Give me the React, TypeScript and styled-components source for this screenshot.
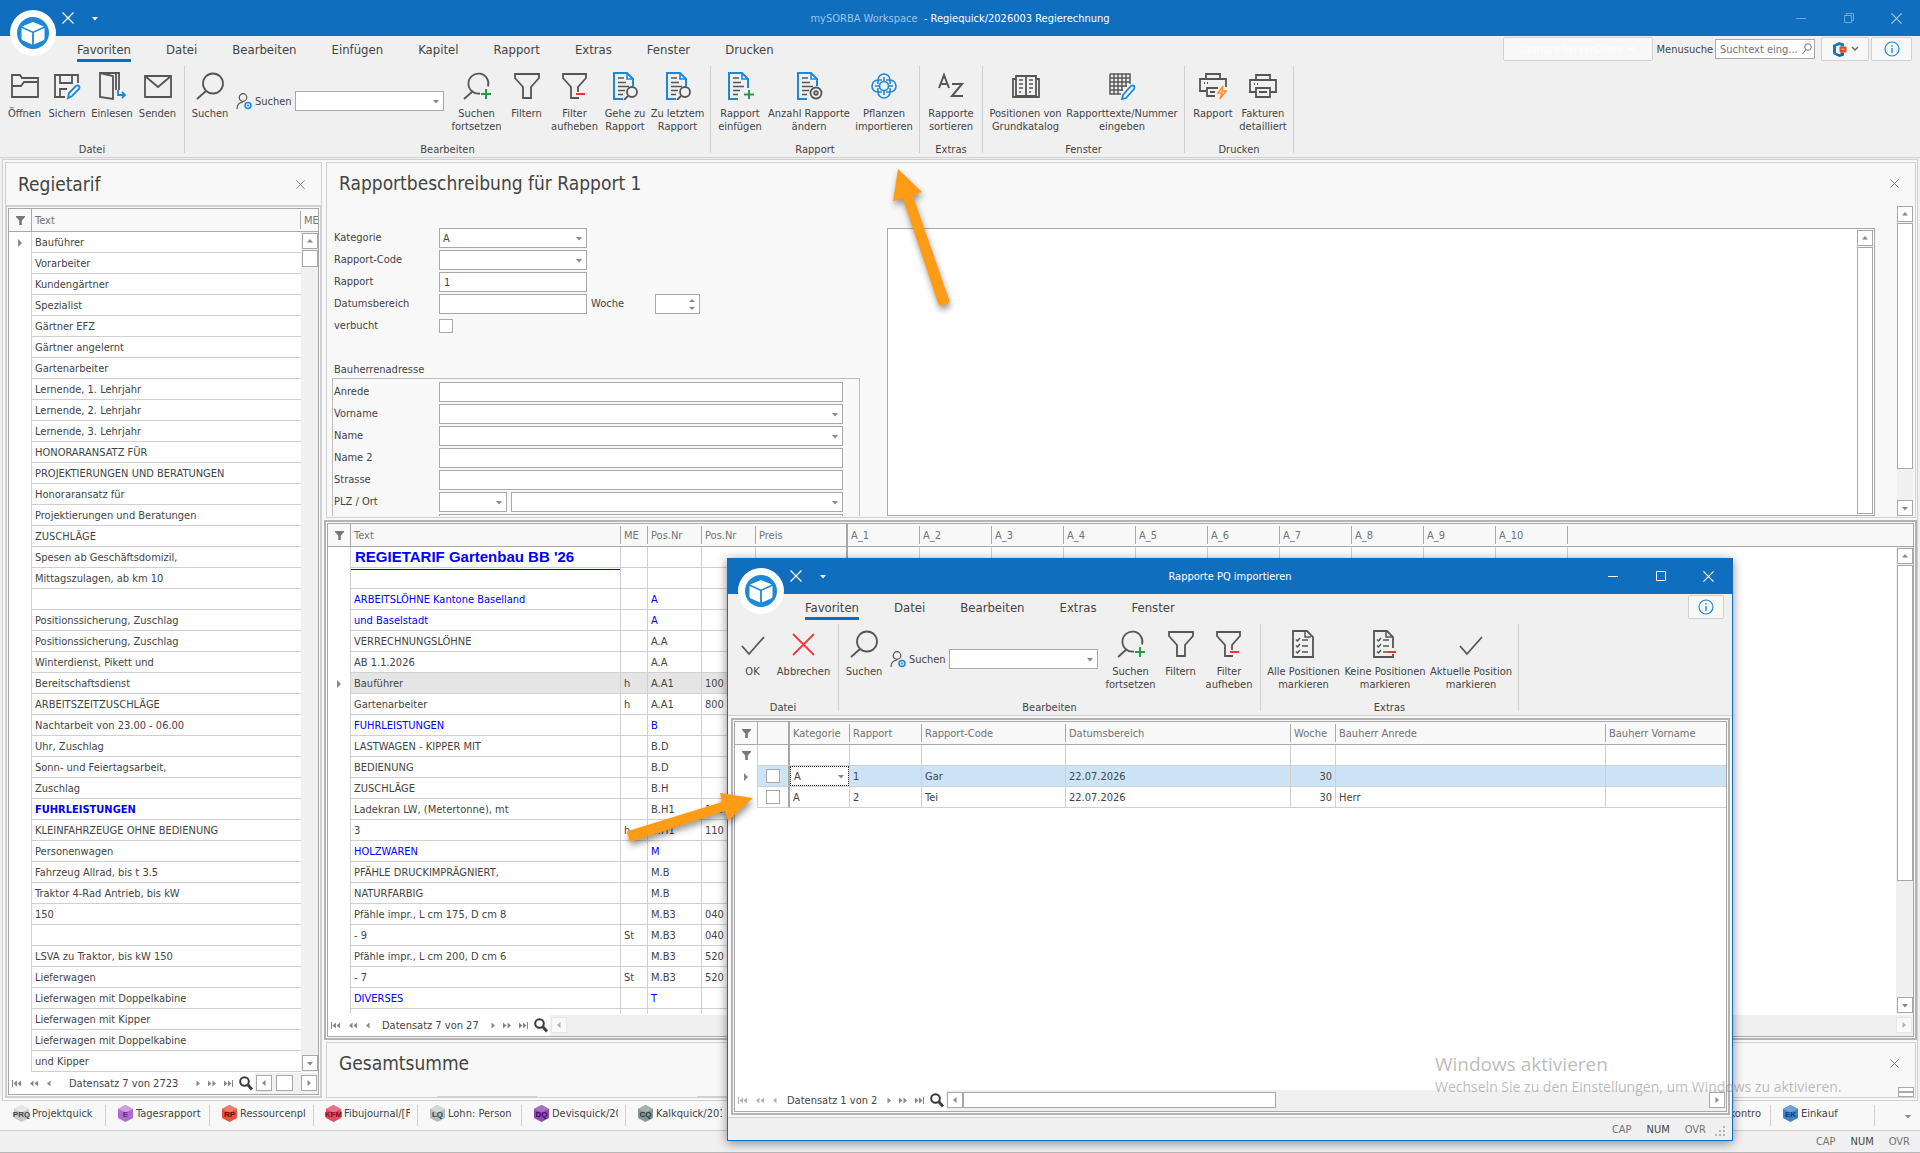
import React from 'react';
import styled, { createGlobalStyle, css } from 'styled-components';

const UI_FONT = '"DejaVu Sans Condensed", Tahoma, Roboto, sans-serif';
const INK = '#444444';
const MUTED = '#737373';
const BLUE = '#106ebe';
const SKY = '#1e88d8';
const LINE = '#d0d0d0';
const EDGE = '#a8a8a8';
const CHROME = '#f0f0f0';
const SURFACE = '#f8f8f8';

const GlobalStyle = createGlobalStyle`
  *, *::before, *::after { box-sizing: border-box; }
  body { margin: 0; font: 11px/13px ${UI_FONT}; color: ${INK}; background: ${CHROME}; overflow: hidden; }
  button, input, select, textarea { font: inherit; color: inherit; margin: 0; padding: 0; border: 0; background: none; outline: 0; border-radius: 0; }
  button { cursor: default; }
  svg { display: block; flex: none; }
`;

/* ---------- shell ---------- */

const Shell = styled.div`
  position: relative;
  display: flex;
  flex-direction: column;
  height: 100vh;
  overflow: hidden;
`;

const TitleBar = styled.header`
  display: flex;
  flex: none;
  align-items: center;
  height: 36px;
  background: ${BLUE};
  color: #fff;
`;

const TitleSide = styled.div<{ $end?: boolean }>`
  display: flex;
  flex: 1;
  align-items: center;
  justify-content: ${p => (p.$end ? 'flex-end' : 'flex-start')};
`;

const LogoSlot = styled.div`
  position: relative;
  width: 56px;
  height: 36px;
`;

const LogoMark = styled.svg`
  position: absolute;
  left: 10px;
  top: 10px;
  z-index: 2;
`;

const TitleTool = styled.button<{ $w: number; $dim?: boolean }>`
  display: flex;
  align-items: center;
  justify-content: center;
  width: ${p => p.$w}px;
  height: 36px;
  opacity: ${p => (p.$dim ? 0.4 : 1)};
`;

const TitleText = styled.h1`
  margin: 0;
  font: inherit;
  white-space: pre;
`;

const Faded = styled.span`
  color: #9cc6ea;
`;

/* ---------- ribbon ---------- */

const Ribbon = styled.div`
  flex: none;
  background: ${CHROME};
  border-bottom: 1px solid ${LINE};
`;

const TabRow = styled.div`
  display: flex;
  align-items: flex-start;
  height: 30px;
  padding-left: 77px;
`;

const Tabs = styled.nav`
  display: flex;
  flex: 1;
  gap: 35px;
`;

const Tab = styled.button<{ $on?: boolean }>`
  height: 26px;
  font-size: 13px;
  line-height: 18px;
  border-top: 4px solid transparent;
  border-bottom: 3px solid ${p => (p.$on ? BLUE : 'transparent')};
`;

const Tools = styled.div`
  display: flex;
  align-items: center;
  gap: 2px;
  padding: 1px 8px 0 0;
`;

const ToolBox = styled.button<{ $w: number }>`
  display: flex;
  align-items: center;
  justify-content: center;
  gap: 4px;
  width: ${p => p.$w}px;
  height: 24px;
  border: 1px solid ${LINE};
  border-radius: 2px;
  background: ${SURFACE};
  color: #fff;
`;

const MenuSearch = styled.label`
  display: flex;
  align-items: center;
  gap: 2px;
  padding: 0 4px 0 2px;
`;

const MenuField = styled.span`
  display: flex;
  align-items: center;
  width: 100px;
  height: 20px;
  padding: 0 2px 0 4px;
  border: 1px solid ${EDGE};
  background: #fff;
`;

const BareInput = styled.input`
  flex: 1;
  width: 100%;
  min-width: 0;
  text-overflow: ellipsis;
  &::placeholder { color: ${MUTED}; opacity: 1; }
`;

const GroupRow = styled.div`
  display: flex;
`;

const Group = styled.section`
  display: flex;
  flex-direction: column;
  height: 91px;
  padding: 0 4px;
`;

const Divider = styled.span<{ $h?: number }>`
  flex: none;
  width: 1px;
  height: ${p => p.$h ?? 87}px;
  background: ${LINE};
`;

const GroupItems = styled.div`
  display: flex;
  flex: 1;
`;

const GroupName = styled.div`
  text-align: center;
  height: 14px;
`;

const RibbonButton = styled.button<{ $w: number }>`
  display: flex;
  flex-direction: column;
  align-items: center;
  gap: 7px;
  width: ${p => p.$w}px;
  padding-top: 6px;
  line-height: 13px;
  white-space: pre;
  text-align: center;
`;

const Finder = styled.label`
  display: flex;
  align-items: center;
  gap: 3px;
  width: 217px;
  height: 20px;
  margin-top: 25px;
  padding: 0 5px;
`;

/* ---------- fields ---------- */

const fieldBox = css`
  height: 20px;
  border: 1px solid ${EDGE};
  background: #fff;
`;

const ComboBox = styled.span<{ $w?: number; $focus?: boolean }>`
  ${fieldBox}
  display: flex;
  align-items: center;
  flex: ${p => (p.$w ? 'none' : '1')};
  width: ${p => (p.$w ? p.$w + 'px' : 'auto')};
  padding-right: 4px;
  ${p => p.$focus && 'border: 1px dotted #333;'}
`;

const Select = styled.select`
  flex: 1;
  min-width: 0;
  height: 100%;
  padding-left: 3px;
  appearance: none;
`;

const TextField = styled.input<{ $w?: number }>`
  ${fieldBox}
  border: 1px solid ${EDGE} !important;
  background: #fff !important;
  flex: ${p => (p.$w ? 'none' : '1')};
  width: ${p => (p.$w ? p.$w + 'px' : 'auto')};
  padding-left: 4px !important;
`;

const Tick = styled.input.attrs({ type: 'checkbox' })`
  appearance: none;
  display: block;
  width: 14px;
  height: 14px;
  border: 1px solid ${EDGE} !important;
  background: #fff !important;
`;

const Spin = styled.span`
  ${fieldBox}
  display: flex;
  align-items: center;
  width: 45px;
  padding-right: 4px;
`;

const Arrows = styled.span`
  display: flex;
  flex-direction: column;
  gap: 5px;
`;

/* ---------- dock ---------- */

const Dock = styled.main`
  display: flex;
  flex: 1;
  gap: 2px;
  min-height: 0;
  margin: 1px 2px 0;
  padding: 2px 0 2px 2px;
  border: 1px solid ${LINE};
  background: ${SURFACE};
`;

const LeftDock = styled.aside`
  display: flex;
  flex: none;
  flex-direction: column;
  width: 317px;
`;

const Workspace = styled.div`
  display: flex;
  flex: 1;
  flex-direction: column;
  gap: 2px;
  min-width: 0;
`;

const PanelHead = styled.div<{ $boxed?: boolean }>`
  display: flex;
  flex: none;
  align-items: center;
  justify-content: space-between;
  height: ${p => (p.$boxed ? 43 : 41)}px;
  padding: 0 16px 0 12px;
  ${p => p.$boxed && `border: 1px solid ${LINE}; border-bottom: 0;`}
`;

const PanelTitle = styled.h2`
  margin: 0;
  padding-bottom: 1px;
  font-size: 19px;
  line-height: 22px;
  font-weight: 400;
`;

const Panel = styled.section<{ $h: number }>`
  flex: none;
  display: flex;
  flex-direction: column;
  height: ${p => p.$h}px;
  margin: 0 1px 0 2px;
  border: 1px solid ${LINE};
  overflow: hidden;
`;

const FormArea = styled.div`
  display: flex;
  flex: 1;
  min-height: 0;
  padding: 2px 2px 1px 5px;
`;

const FormColumn = styled.form`
  display: flex;
  flex: none;
  flex-direction: column;
  width: 528px;
  margin-right: 27px;
  padding-top: 21px;
  overflow: hidden;
`;

const FormRow = styled.div`
  display: flex;
  flex: none;
  align-items: center;
  height: 22px;
  padding-left: 2px;
`;

const FormLabel = styled.label<{ $w?: number }>`
  flex: none;
  width: ${p => p.$w ?? 105}px;
  padding-bottom: 1px;
`;

const FormGap = styled.div`
  flex: none;
  height: 22px;
`;

const FormGapInline = styled.span`
  flex: none;
  width: 4px;
`;

const Legend = styled.div`
  flex: none;
  height: 19px;
  padding: 4px 0 0 2px;
`;

const AddressBox = styled.fieldset`
  min-width: 0;
  margin: 0;
  padding: 2px 16px 0 0;
  border: 1px solid #bdbdbd;
  border-bottom: 0;
  ${FormRow} { padding-left: 1px; }
`;

const NotesBox = styled.div`
  display: flex;
  flex: 1;
  margin: 22px 22px 0 0;
  padding: 1px;
  border: 1px solid ${EDGE};
  background: #fff;
`;

const Notes = styled.textarea`
  flex: 1;
  resize: none;
`;

/* ---------- scroll bars ---------- */

const Track = styled.div<{ $row?: boolean }>`
  display: flex;
  flex-direction: ${p => (p.$row ? 'row' : 'column')};
  flex: ${p => (p.$row ? '1' : 'none')};
  align-self: stretch;
  width: ${p => (p.$row ? 'auto' : '16px')};
  gap: ${p => (p.$row ? 0 : 1)}px;
  background: ${CHROME};
`;

const ScrollButton = styled.button<{ $off?: boolean }>`
  display: flex;
  flex: none;
  align-items: center;
  justify-content: center;
  width: 16px;
  height: 16px;
  border: 1px solid ${p => (p.$off ? '#e0e0e0' : EDGE)};
  background: #fff;
  opacity: ${p => (p.$off ? 0.6 : 1)};
`;

const Thumb = styled.span<{ $size?: number; $row?: boolean }>`
  flex: ${p => (p.$size ? 'none' : '1')};
  ${p => p.$size && (p.$row ? `width: ${p.$size}px; height: 16px;` : `height: ${p.$size}px;`)}
  border: 1px solid ${EDGE};
  background: #fff;
`;

const Fill = styled.span<{ $size?: number }>`
  flex: ${p => (p.$size ? 'none' : '1')};
  width: ${p => (p.$size ? p.$size + 'px' : 'auto')};
`;

/* ---------- grids ---------- */

const Frame = styled.div<{ $tone: string }>`
  display: flex;
  flex: 1;
  min-height: 0;
  padding: 1px;
  border: 2px solid ${p => p.$tone};
  background: ${SURFACE};
`;

const FrameInner = styled.div`
  display: flex;
  flex: 1;
  flex-direction: column;
  min-width: 0;
  border: 1px solid ${EDGE};
  background: #fff;
`;

const GridArea = styled.div`
  display: flex;
  flex: 1;
  min-height: 0;
  overflow: hidden;
`;

const GridClip = styled.div`
  flex: 1;
  min-width: 0;
  overflow: hidden;
  background: linear-gradient(${SURFACE} 22px, ${EDGE} 22px, ${EDGE} 23px, #fff 23px);
`;

const GridSide = styled.div<{ $w: number }>`
  display: flex;
  flex: none;
  flex-direction: column;
  width: ${p => p.$w}px;
`;

const SideHead = styled.div`
  flex: none;
  height: 23px;
  padding: 5px 0 0 3px;
  border-bottom: 1px solid ${EDGE};
  background: ${SURFACE};
  color: ${MUTED};
  overflow: hidden;
`;

const SideTrack = styled.div`
  display: flex;
  flex: 1;
  justify-content: center;
  min-height: 0;
  padding: 1px 0;
  background: ${CHROME};
`;

const Table = styled.table<{ $w?: number }>`
  width: ${p => (p.$w ? p.$w + 'px' : '100%')};
  table-layout: fixed;
  border-collapse: separate;
  border-spacing: 0;
`;

const HeadCell = styled.th<{ $mark?: boolean; $frozen?: boolean }>`
  height: 23px;
  padding: 0;
  border-bottom: 1px solid ${EDGE};
  border-right: ${p => (p.$frozen ? `2px solid ${EDGE}` : p.$mark ? `1px solid ${EDGE}` : '0')};
  background: ${SURFACE};
  color: ${MUTED};
  font-weight: 400;
  text-align: left;
  > svg { margin: 0 auto; }
`;

const HeadText = styled.span<{ $bare?: boolean }>`
  display: block;
  height: 18px;
  padding: 3px 0 0 3px;
  border-right: ${p => (p.$bare ? '0' : `1px solid ${EDGE}`)};
  white-space: nowrap;
  overflow: hidden;
`;

const MarkCell = styled.td`
  height: 21px;
  padding: 0;
  border-right: 1px solid ${LINE};
  background: #fff;
  svg { margin: 0 auto; }
`;

type Tone = 'plain' | 'blue' | 'bold' | 'heading';

const Cell = styled.td<{ $tone?: Tone; $end?: boolean; $frozen?: boolean; $open?: boolean; $under?: boolean; $flush?: boolean }>`
  height: 21px;
  padding: ${p => (p.$flush ? '0' : '0 3px')};
  border-bottom: 1px solid ${LINE};
  border-right: ${p => (p.$open ? '0' : p.$frozen ? `2px solid ${EDGE}` : `1px solid ${LINE}`)};
  ${p => p.$tone && p.$tone !== 'plain' && 'color: #0000ff;'}
  ${p => p.$tone === 'bold' && 'font-weight: 700;'}
  ${p => p.$tone === 'heading' && 'padding-left: 4px; font: 700 15px/18px "Liberation Sans", Arial, sans-serif;'}
  ${p => p.$under && 'box-shadow: inset 0 2px 0 -1px #fff, inset 0 3px 0 -1px #0000c8;'}
  text-align: ${p => (p.$end ? 'right' : 'left')};
  white-space: nowrap;
  overflow: hidden;
  > ${Tick} { margin: 0 auto; }
`;

const Row = styled.tr<{ $bg?: string }>`
  background: ${p => p.$bg ?? '#fff'};
`;

const NavBar = styled.div`
  display: flex;
  flex: none;
  align-items: center;
  height: 22px;
  padding-left: 3px;
  background: #fff;
`;

const NavIcons = styled.div<{ $gap: string }>`
  display: flex;
  align-items: center;
  gap: ${p => p.$gap};
`;

const NavText = styled.span<{ $pad: number }>`
  padding: 0 ${p => p.$pad}px;
  white-space: nowrap;
`;

const NavScroll = styled.div`
  display: flex;
  flex: 1;
  margin-left: 2px;
  padding: 2px 1px 3px;
  background: ${CHROME};
`;

/* ---------- footer ---------- */

const TaskStrip = styled.nav`
  display: flex;
  flex: none;
  height: 30px;
  padding-left: 2px;
  border-bottom: 1px solid ${LINE};
  background: ${SURFACE};
`;

const Task = styled.button`
  display: flex;
  flex: none;
  align-items: flex-start;
  width: 104px;
  padding: 4px 0 0 11px;
  gap: 2px;
`;

const TaskName = styled.span`
  width: 66px;
  padding-top: 2px;
  text-align: left;
  white-space: nowrap;
  overflow: hidden;
`;

const TaskEdge = styled.span`
  flex: 1;
  align-self: flex-start;
  height: 21px;
  border-right: 1px solid ${LINE};
`;

const TaskMore = styled.button`
  display: flex;
  align-items: center;
  justify-content: flex-end;
  width: 45px;
  padding-right: 9px;
`;

const StatusBar = styled.footer<{ $grip?: boolean }>`
  display: flex;
  flex: none;
  align-items: center;
  justify-content: flex-end;
  gap: 15px;
  height: ${p => (p.$grip ? 23 : 22)}px;
  padding-right: ${p => (p.$grip ? 6 : 10)}px;
  border-top: ${p => (p.$grip ? `1px solid ${LINE}` : '0')};
  border-bottom: ${p => (p.$grip ? '0' : '1px solid #b8b8b8')};
  background: ${CHROME};
  color: ${MUTED};
  svg { margin: 4px 0 0 -6px; }
`;

const Active = styled.span`
  color: ${INK};
`;

/* ---------- overlays ---------- */

const Dialog = styled.section`
  position: absolute;
  left: 727px;
  top: 558px;
  z-index: 5;
  display: flex;
  flex-direction: column;
  width: 1006px;
  height: 583px;
  border: 1px solid ${BLUE};
  border-top: 0;
  background: ${SURFACE};
  box-shadow: 0 2px 10px rgba(0, 0, 0, 0.45);
`;

const DialogBody = styled.div`
  display: flex;
  flex: 1;
  min-height: 0;
  padding: 2px 2px 2px 3px;
`;

const Pointers = styled.svg`
  position: absolute;
  left: 600px;
  top: 150px;
  z-index: 8;
  pointer-events: none;
  filter: drop-shadow(1px 4px 3px rgba(0, 0, 0, 0.4));
`;

const Watermark = styled.div`
  position: absolute;
  left: 1435px;
  top: 1051px;
  z-index: 9;
  color: rgba(120, 120, 120, 0.5);
  font: 14px/20px "Open Sans", "Segoe UI", sans-serif;
  white-space: nowrap;
  pointer-events: none;
`;

const WatermarkHead = styled.div`
  font-size: 19px;
  line-height: 26px;
`;

/* ---------- drawings ---------- */

const G = '#555555';

const Logo = () => (
  <LogoMark width="46" height="46" viewBox="0 0 46 46">
    <circle cx="23" cy="23" r="23" fill="#fff" />
    <circle cx="23" cy="23" r="16" fill={SKY} />
    <path d="M23 12l11 4.5-11 5-11-5zM11.5 18l10.600 4.800V34.500L13 30.500Q11.500 29.800 11.500 28.500zM34.500 18l-10.600 4.800V34.500L33 30.500Q34.500 29.800 34.500 28.500z" fill="#fff" />
  </LogoMark>
);

const Cross = ({ size = 9, color = MUTED }: { size?: number; color?: string }) => (
  <svg width={size} height={size} viewBox="0 0 12 12" stroke={color} strokeWidth="1.2" fill="none">
    <path d="M.5 .5l11 11M11.500 .5l-11 11" />
  </svg>
);

const Caret = ({ color = '#888', dir = 'down' }: { color?: string; dir?: 'down' | 'up' | 'left' | 'right' }) => {
  const d = { down: 'M0 2h6L3 5.500z', up: 'M0 4.500h6L3 1z', left: 'M4.500 0v6L1 3z', right: 'M1.500 0v6L5 3z' }[dir];
  return (
    <svg width="6" height="6" viewBox="0 0 6 6" fill={color}>
      <path d={d} />
    </svg>
  );
};

const SpinCaret = ({ up }: { up?: boolean }) => (
  <svg width="6" height="3" viewBox="0 0 6 3" fill="#888">
    <path d={up ? 'M0 3h6L3 0z' : 'M0 0h6L3 3z'} />
  </svg>
);

const Funnel = () => (
  <svg width="9" height="9" viewBox="0 0 9 9" fill="#777">
    <path d="M0 0h9v1L5.800 4.500V9H3.200V4.500L0 1z" />
  </svg>
);

const RowMark = () => (
  <svg width="4" height="8" viewBox="0 0 4 8" fill="#888">
    <path d="M0 0l4 4-4 4z" />
  </svg>
);

const Lens = () => (
  <svg width="14" height="15" viewBox="0 0 14 15" fill="none" stroke="#3a3a3a">
    <circle cx="5.500" cy="5.500" r="4.300" strokeWidth="2" />
    <path d="M9 9l4 4.500" strokeWidth="2.800" />
  </svg>
);

const NAV_SHAPES: Record<string, [number, string]> = {
  first: [9, 'M0 0h1v7H0zM5 .5v6L1.500 3.500zM9 .5v6L5.500 3.500z'],
  pageBack: [8, 'M3.500 .5v6L0 3.500zM8 .5v6L4.500 3.500z'],
  back: [4, 'M3.500 .5v6L0 3.500z'],
  next: [4, 'M.5 .5v6L4 3.500z'],
  pageNext: [8, 'M0 .5v6l3.500-3zM4.500 .5v6L8 3.500z'],
  last: [9, 'M8 0h1v7H8zM0 .5v6l3.500-3zM4 .5v6l3.500-3z'],
};

const NavIcon = ({ kind, dim }: { kind: string; dim?: boolean }) => {
  const [w, d] = NAV_SHAPES[kind];
  return (
    <button aria-label={kind}>
      <svg width={w} height="7" viewBox={`0 0 ${w} 7`} fill={dim ? '#b4b4b4' : '#888'}>
        <path d={d} />
      </svg>
    </button>
  );
};

const InfoIcon = () => (
  <svg width="16" height="16" viewBox="0 0 16 16" fill="none" stroke={SKY} strokeWidth="1.200">
    <circle cx="8" cy="8" r="7" />
    <path d="M8 7v5M8 4v1.500" strokeWidth="1.400" />
  </svg>
);

const OfficeIcon = () => (
  <svg width="15" height="15" viewBox="0 0 15 15">
    <path d="M1 3L7 0l5 1.500v3H8.500V3L4 4.300v6.700l-3 1z" fill="#0a7ad0" />
    <path d="M4 11l4.500 1.500v-2H12v3L7.500 15 1 12z" fill="#0a64b4" />
    <rect x="7.500" y="4.500" width="7" height="6" rx="1" fill="#e8481c" />
    <path d="M9.500 6.500h3v1.500h-3z" fill="#ff9a70" />
  </svg>
);

const ChevronDown = ({ color }: { color: string }) => (
  <svg width="8" height="6" viewBox="0 0 8 6" fill="none" stroke={color} strokeWidth="1.500">
    <path d="M1 1l3 3 3-3" />
  </svg>
);

const PersonIcon = () => (
  <svg width="16" height="17" viewBox="0 0 16 17" fill="none" stroke={G} strokeWidth="1.200">
    <circle cx="7" cy="4.500" r="3.800" />
    <path d="M1 16c0-4 2-6.500 6-7" />
    <circle cx="12" cy="12.500" r="3" stroke={SKY} strokeWidth="1.500" fill="#d8ecfa" />
    <circle cx="12" cy="12.500" r="1" fill={SKY} stroke="none" />
  </svg>
);

const Sheet = ({ short }: { short?: boolean }) => (
  <>
    <path d={short ? 'M12 27H3V1h13l6 6v7' : 'M12 27H3V1h13l6 6v9'} stroke={SKY} strokeWidth="2" />
    <path d="M16 1v6h6" stroke={SKY} strokeWidth="1.600" />
    <path d="M7 6h6M7 10.500h8M7 14.500h11M7 18.500h7M7 22.500h5" strokeWidth="1.500" />
  </>
);

const Checklist = () => (
  <>
    <path d="M15 1v6h6" strokeWidth="1.500" />
    <path d="M6 9.500l1.500 1.500 2.500-3M6 15.500L7.500 17l2.500-3M6 21.500L7.500 23l2.500-3M12 10h6M12 16h6M12 22h6" strokeWidth="1.500" />
  </>
);

const DRAWINGS: Record<string, React.ReactNode> = {
  open: <path d="M1 25V3h8l2 3h16v19zM1 14h9l3-4h14" />,
  save: (
    <>
      <path d="M12 25H2V3h23v8" />
      <path d="M7 3v8h12V3M7 25v-8h7" />
      <path d="M15 26l1-5 7-7q2-1 3 0t0 3l-7 7z" stroke={SKY} />
    </>
  ),
  read: (
    <>
      <path d="M18 18V1H2v24l13 2V4L2 1" />
      <path d="M16 1h5v17" />
      <path d="M20 18v5h7M24 20l3 3-3 3" stroke={SKY} />
    </>
  ),
  send: <path d="M1 4h26v21H1zM1 4l13 11L27 4" />,
  find: (
    <>
      <circle cx="17" cy="11.500" r="10" />
      <path d="M10 19l-9 8" />
    </>
  ),
  findNext: (
    <>
      <path d="M17 21.500A10 10 0 1 1 25 14.500M10 19l-9 8" />
      <path d="M23 17v10M18 22h10" stroke="#2a9a48" strokeWidth="2" />
    </>
  ),
  filter: <path d="M2 2h24v4l-8 9v11h-8V15L2 6z" />,
  filterOff: (
    <>
      <path d="M17 20v-5l8-9V2H2v4l8 9v11h8" />
      <path d="M15 22h9" stroke="#ee3333" strokeWidth="2" />
    </>
  ),
  sheetFind: (
    <>
      <Sheet short />
      <circle cx="21" cy="20" r="5" />
      <path d="M17 24l-4 4" />
    </>
  ),
  sheetAdd: (
    <>
      <Sheet />
      <path d="M23 18v9M18 22.500h10" stroke="#2a9a48" strokeWidth="2" />
    </>
  ),
  sheetGear: (
    <>
      <Sheet short />
      <circle cx="21" cy="21" r="5.500" />
      <circle cx="21" cy="21" r="1.800" />
    </>
  ),
  plant: (
    <g stroke={SKY} strokeWidth="1.600">
      <circle cx="14" cy="14" r="4.500" />
      <path d="M8 12V8a6 6 0 0 1 12 0v4M8 16v4a6 6 0 0 0 12 0v-4M12 8H8a6 6 0 0 0 0 12h4M16 8h4a6 6 0 0 1 0 12h-4" />
      <path d="M14 5v4M14 19v4M5 14h4M19 14h4" />
    </g>
  ),
  sort: (
    <path d="M2 16L7 3l5 13M4 12h7M15 12h10L15 24h11" strokeWidth="2" />
  ),
  book: (
    <>
      <path d="M14 4v20M4 4h20v20H4z" />
      <path d="M4 7H1v18h26V7h-3" />
      <path d="M7 8h4M7 12h4M7 16h4M7 20h2M17 8h4M17 12h4M17 16h4M17 20h2" strokeWidth="1.500" />
    </>
  ),
  gridEdit: (
    <>
      <path d="M2 2h20v10M2 2v20h11M2 6h20M2 10h20M2 14h17M2 18h13M6 2v20M10 2v20M14 2v17M18 2v13" strokeWidth="1.500" />
      <path d="M14 27l1-4 8-9q2-1 3 0t0 3l-8 9z" stroke={SKY} />
    </>
  ),
  printFlash: (
    <>
      <path d="M7 7V2h14v5M7 19H1V7h26v8M16 24H8v-8h11M5 11h1M8 11h1M11 20h5" />
      <path d="M24 14l-5 7h4l-2 6 6-8h-4z" stroke="#ff9028" strokeWidth="1.500" />
    </>
  ),
  print: <path d="M7 8V3h14v5M7 20H1V8h26v12h-6M7 16h14v9H7zM5 12h1M8 12h1M10 20h8" />,
  ok: <path d="M3 16l7 8L25 7" />,
  cancel: <path d="M3 4l21 21M24 4L3 25" stroke="#ee3b3b" strokeWidth="1.800" />,
  checkAll: (
    <>
      <path d="M3 1h14l6 6v20H3z" />
      <Checklist />
    </>
  ),
  checkNone: (
    <>
      <path d="M22 18V7l-6-6H3v26h19v-3" />
      <Checklist />
      <path d="M17 22h8" stroke="#ee3333" strokeWidth="2" />
    </>
  ),
};

const Drawing = ({ name }: { name: string }) => (
  <svg width="28" height="28" viewBox="0 0 28 28" fill="none" stroke={G} strokeWidth="1.800">
    {DRAWINGS[name]}
  </svg>
);

const CubeBadge = ({ tag, top, side, ink }: { tag: string; top: string; side: string; ink: string }) => (
  <svg width="17" height="17" viewBox="0 0 17 17" overflow="visible">
    <path d="M8.500 0l7.500 4v9l-7.500 4L1 13V4z" fill={side} />
    <path d="M8.500 0l7.500 4-7.500 3.500L1 4z" fill={top} />
    <text x="8.500" y="12" textAnchor="middle" fontSize="8" fontWeight="700" fontFamily="Liberation Sans" fill={ink}>
      {tag}
    </text>
  </svg>
);

/* ---------- composed parts ---------- */

type Item = { icon: string; label: string; w: number };

const Buttons = ({ items }: { items: Item[] }) => (
  <>
    {items.map(b => (
      <RibbonButton key={b.label} $w={b.w}>
        <Drawing name={b.icon} />
        {b.label}
      </RibbonButton>
    ))}
  </>
);

const RibbonGroup = ({ name, children }: { name: string; children: React.ReactNode }) => (
  <>
    <Group aria-label={name}>
      <GroupItems>{children}</GroupItems>
      <GroupName>{name}</GroupName>
    </Group>
    <Divider />
  </>
);

const Combo = ({ id, w, value = '', focus }: { id?: string; w?: number; value?: string; focus?: boolean }) => (
  <ComboBox $w={w} $focus={focus}>
    <Select id={id} defaultValue={value} aria-label={id ? undefined : 'Auswahl'}>
      <option value={value}>{value}</option>
    </Select>
    <Caret />
  </ComboBox>
);

const SearchFinder = ({ id }: { id: string }) => (
  <Finder htmlFor={id}>
    <PersonIcon />
    Suchen
    <Combo id={id} w={149} />
  </Finder>
);

const VScroll = ({ thumb }: { thumb?: number }) => (
  <Track>
    <ScrollButton aria-label="Nach oben"><Caret dir="up" /></ScrollButton>
    <Thumb $size={thumb} />
    {thumb && <Fill />}
    {thumb && <ScrollButton aria-label="Nach unten"><Caret dir="down" /></ScrollButton>}
  </Track>
);

const HScroll = ({ thumb, lead, off }: { thumb?: number; lead?: number; off?: boolean }) => (
  <NavScroll>
    <Track $row>
      <ScrollButton $off={off} aria-label="Nach links"><Caret dir="left" /></ScrollButton>
      {lead && <Fill $size={lead} />}
      {thumb && <Thumb $row $size={thumb} />}
      <Fill />
      <ScrollButton $off={off} aria-label="Nach rechts"><Caret dir="right" /></ScrollButton>
    </Track>
  </NavScroll>
);

const Navigator = ({ text, pad, dim, children }: { text: string; pad: number; dim?: boolean; children: React.ReactNode }) => (
  <NavBar>
    <NavIcons $gap="9px">
      <NavIcon kind="first" dim={dim} />
      <NavIcon kind="pageBack" dim={dim} />
      <NavIcon kind="back" dim={dim} />
    </NavIcons>
    <NavText $pad={pad}>{text}</NavText>
    <NavIcons $gap="8px">
      <NavIcon kind="next" />
      <NavIcon kind="pageNext" />
      <NavIcon kind="last" />
    </NavIcons>
    <LensButton aria-label="Suchen"><Lens /></LensButton>
    {children}
  </NavBar>
);

const LensButton = styled.button`
  padding-left: 6px !important;
`;

const Chrome = ({ title, dim }: { title: React.ReactNode; dim?: boolean }) => (
  <TitleBar>
    <TitleSide>
      <LogoSlot><Logo /></LogoSlot>
      <TitleTool $w={24} aria-label="Schliessen"><Cross size={12} color="#fff" /></TitleTool>
      <TitleTool $w={30} aria-label="Anpassen"><Caret color="#fff" /></TitleTool>
    </TitleSide>
    <TitleText>{title}</TitleText>
    <TitleSide $end>
      <TitleTool $w={48} $dim={dim} aria-label="Minimieren">
        <svg width="10" height="10" stroke="#fff"><path d="M0 5.500h10" /></svg>
      </TitleTool>
      <TitleTool $w={48} $dim={dim} aria-label="Maximieren">
        <svg width="10" height="10" viewBox="0 0 10 10" stroke="#fff" fill="none">
          {dim ? <path d="M.5 2.500h7v7h-7zM2.500 2.500v-2h7v7h-2" /> : <path d="M.5 .5h9v9h-9z" />}
        </svg>
      </TitleTool>
      <TitleTool $w={47} aria-label="Fenster schliessen"><Cross size={11} color={dim ? '#a8cbe8' : '#fff'} /></TitleTool>
    </TitleSide>
  </TitleBar>
);

/* ---------- data ---------- */

const TARIFF = [
  'Bauführer', 'Vorarbeiter', 'Kundengärtner', 'Spezialist', 'Gärtner EFZ', 'Gärtner angelernt', 'Gartenarbeiter',
  'Lernende, 1. Lehrjahr', 'Lernende, 2. Lehrjahr', 'Lernende, 3. Lehrjahr', 'HONORARANSATZ FÜR',
  'PROJEKTIERUNGEN UND BERATUNGEN', 'Honoraransatz für', 'Projektierungen und Beratungen', 'ZUSCHLÄGE',
  'Spesen ab Geschäftsdomizil,', 'Mittagszulagen, ab km 10', '', 'Positionssicherung, Zuschlag',
  'Positionssicherung, Zuschlag', 'Winterdienst, Pikett und', 'Bereitschaftsdienst', 'ARBEITSZEITZUSCHLÄGE',
  'Nachtarbeit von 23.00 - 06.00', 'Uhr, Zuschlag', 'Sonn- und Feiertagsarbeit,', 'Zuschlag', 'FUHRLEISTUNGEN',
  'KLEINFAHRZEUGE OHNE BEDIENUNG', 'Personenwagen', 'Fahrzeug Allrad, bis t 3.5', 'Traktor 4-Rad Antrieb, bis kW',
  '150', '', 'LSVA zu Traktor, bis kW 150', 'Lieferwagen', 'Lieferwagen mit Doppelkabine', 'Lieferwagen mit Kipper',
  'Lieferwagen mit Doppelkabine', 'und Kipper',
];

type Line = [string, string, string, string, Tone?];

const LINES: Line[] = [
  ["REGIETARIF Gartenbau BB '26", '', '', '', 'heading'],
  ['', '', '', ''],
  ['ARBEITSLÖHNE Kantone Baselland', '', 'A', '', 'blue'],
  ['und Baselstadt', '', 'A', '', 'blue'],
  ['VERRECHNUNGSLÖHNE', '', 'A.A', ''],
  ['AB 1.1.2026', '', 'A.A', ''],
  ['Bauführer', 'h', 'A.A1', '100'],
  ['Gartenarbeiter', 'h', 'A.A1', '800'],
  ['FUHRLEISTUNGEN', '', 'B', '', 'blue'],
  ['LASTWAGEN - KIPPER MIT', '', 'B.D', ''],
  ['BEDIENUNG', '', 'B.D', ''],
  ['ZUSCHLÄGE', '', 'B.H', ''],
  ['Ladekran LW, (Metertonne), mt', '', 'B.H1', '110'],
  ['3', 'h', 'B.H1', '110'],
  ['HOLZWAREN', '', 'M', '', 'blue'],
  ['PFÄHLE DRUCKIMPRÄGNIERT,', '', 'M.B', ''],
  ['NATURFARBIG', '', 'M.B', ''],
  ['Pfähle impr., L cm 175, D cm 8', '', 'M.B3', '040'],
  ['- 9', 'St', 'M.B3', '040'],
  ['Pfähle impr., L cm 200, D cm 6', '', 'M.B3', '520'],
  ['- 7', 'St', 'M.B3', '520'],
  ['DIVERSES', '', 'T', '', 'blue'],
  ['', '', '', ''],
];

const DAYS = Array.from({ length: 10 }, (_, i) => `A_${i + 1}`);

const TASKS = [
  { tag: 'PRQ', name: 'Projektquick', top: '#e4e8ea', side: '#c4cacc', ink: '#444' },
  { tag: 'E', name: 'Tagesrapport', top: '#cf9fe6', side: '#b06bd0', ink: '#5a2a78' },
  { tag: 'RP', name: 'Ressourcenpl', top: '#f07a68', side: '#e8503c', ink: '#5a140c' },
  { tag: 'KFM', name: 'Fibujournal/[F', top: '#ee7286', side: '#e04a62', ink: '#7a1428' },
  { tag: 'LQ', name: 'Lohn: Person', top: '#d4d9dc', side: '#b4bcc0', ink: '#444' },
  { tag: 'DQ', name: 'Devisquick/20', top: '#a870c8', side: '#8e4bb0', ink: '#3c1454' },
  { tag: 'CQ', name: 'Kalkquick/201', top: '#a4b2b0', side: '#869694', ink: '#2a3634' },
];

const TASKS_END = [
  { tag: 'OK', name: 'Objektkontro', top: '#7ab0e4', side: '#4585d0', ink: '#163c70' },
  { tag: 'EK', name: 'Einkauf', top: '#6aa2de', side: '#3f80cc', ink: '#163c70' },
];

const TaskItems = ({ items }: { items: typeof TASKS }) => (
  <>
    {items.map(t => (
      <Task key={t.tag}>
        <CubeBadge tag={t.tag} top={t.top} side={t.side} ink={t.ink} />
        <TaskName>{t.name}</TaskName>
        <TaskEdge />
      </Task>
    ))}
  </>
);

const KeyStates = ({ grip }: { grip?: boolean }) => (
  <StatusBar $grip={grip}>
    <span>CAP</span>
    <Active>NUM</Active>
    <span>OVR</span>
    {grip && (
      <svg width="11" height="11" viewBox="0 0 11 11" fill="#b4b4b4">
        <path d="M8 0h2v2H8zM4 4h2v2H4zM8 4h2v2H8zM0 8h2v2H0zM4 8h2v2H4zM8 8h2v2H8z" />
      </svg>
    )}
  </StatusBar>
);

/* ---------- sections ---------- */

const MainRibbon = () => (
  <Ribbon>
    <TabRow>
      <Tabs>
        {['Favoriten', 'Datei', 'Bearbeiten', 'Einfügen', 'Kapitel', 'Rapport', 'Extras', 'Fenster', 'Drucken'].map((t, i) => (
          <Tab key={t} $on={i === 0}>{t}</Tab>
        ))}
      </Tabs>
      <Tools>
        <ToolBox $w={150}>DomaneServerClient <ChevronDown color="#fff" /></ToolBox>
        <MenuSearch>
          Menusuche
          <MenuField>
            <BareInput placeholder="Suchtext eing..." />
            <svg width="10" height="12" viewBox="0 0 10 12" fill="none" stroke={MUTED}>
              <circle cx="6" cy="4" r="3.300" />
              <path d="M4 6.500L.5 11" />
            </svg>
          </MenuField>
        </MenuSearch>
        <ToolBox $w={48} aria-label="Office"><OfficeIcon /><ChevronDown color="#666" /></ToolBox>
        <ToolBox $w={41} aria-label="Info"><InfoIcon /></ToolBox>
      </Tools>
    </TabRow>
    <GroupRow>
      <RibbonGroup name="Datei">
        <Buttons items={[
          { icon: 'open', label: 'Öffnen', w: 41 },
          { icon: 'save', label: 'Sichern', w: 44 },
          { icon: 'read', label: 'Einlesen', w: 46 },
          { icon: 'send', label: 'Senden', w: 45 },
        ]} />
      </RibbonGroup>
      <RibbonGroup name="Bearbeiten">
        <Buttons items={[{ icon: 'find', label: 'Suchen', w: 42 }]} />
        <SearchFinder id="suche" />
        <Buttons items={[
          { icon: 'findNext', label: 'Suchen\nfortsetzen', w: 57 },
          { icon: 'filter', label: 'Filtern', w: 43 },
          { icon: 'filterOff', label: 'Filter\naufheben', w: 53 },
          { icon: 'sheetFind', label: 'Gehe zu\nRapport', w: 48 },
          { icon: 'sheetFind', label: 'Zu letztem\nRapport', w: 57 },
        ]} />
      </RibbonGroup>
      <RibbonGroup name="Rapport">
        <Buttons items={[
          { icon: 'sheetAdd', label: 'Rapport\neinfügen', w: 50 },
          { icon: 'sheetGear', label: 'Anzahl Rapporte\nändern', w: 88 },
          { icon: 'plant', label: 'Pflanzen\nimportieren', w: 62 },
        ]} />
      </RibbonGroup>
      <RibbonGroup name="Extras">
        <Buttons items={[{ icon: 'sort', label: 'Rapporte\nsortieren', w: 54 }]} />
      </RibbonGroup>
      <RibbonGroup name="Fenster">
        <Buttons items={[
          { icon: 'book', label: 'Positionen von\nGrundkatalog', w: 77 },
          { icon: 'gridEdit', label: 'Rapporttexte/Nummer\neingeben', w: 116 },
        ]} />
      </RibbonGroup>
      <RibbonGroup name="Drucken">
        <Buttons items={[
          { icon: 'printFlash', label: 'Rapport', w: 48 },
          { icon: 'print', label: 'Fakturen\ndetailliert', w: 52 },
        ]} />
      </RibbonGroup>
    </GroupRow>
  </Ribbon>
);

const TariffPane = () => (
  <LeftDock>
    <PanelHead $boxed>
      <PanelTitle>Regietarif</PanelTitle>
      <button aria-label="Schliessen"><Cross /></button>
    </PanelHead>
    <Frame $tone={LINE}>
      <FrameInner>
        <GridArea>
          <GridClip>
            <Table>
              <colgroup><col style={{ width: 23 }} /><col /></colgroup>
              <thead>
                <tr>
                  <HeadCell $mark><Funnel /></HeadCell>
                  <HeadCell><HeadText>Text</HeadText></HeadCell>
                </tr>
              </thead>
              <tbody>
                {TARIFF.map((t, i) => (
                  <Row key={i}>
                    <MarkCell>{i === 0 && <RowMark />}</MarkCell>
                    <Cell $open $tone={t === 'FUHRLEISTUNGEN' ? 'bold' : 'plain'}>{t}</Cell>
                  </Row>
                ))}
              </tbody>
            </Table>
          </GridClip>
          <GridSide $w={17}>
            <SideHead>ME</SideHead>
            <SideTrack><VScroll thumb={17} /></SideTrack>
          </GridSide>
        </GridArea>
        <Navigator text="Datensatz 7 von 2723" pad={18}>
          <HScroll lead={4} thumb={17} />
        </Navigator>
      </FrameInner>
    </Frame>
  </LeftDock>
);

const ReportForm = () => (
  <Panel $h={356}>
    <PanelHead>
      <PanelTitle>Rapportbeschreibung für Rapport 1</PanelTitle>
      <button aria-label="Schliessen"><Cross /></button>
    </PanelHead>
    <FormArea>
      <FormColumn>
        <FormRow><FormLabel htmlFor="kat">Kategorie</FormLabel><Combo id="kat" w={148} value="A" /></FormRow>
        <FormRow><FormLabel htmlFor="code">Rapport-Code</FormLabel><Combo id="code" w={148} /></FormRow>
        <FormRow><FormLabel htmlFor="rap">Rapport</FormLabel><TextField id="rap" $w={148} defaultValue="1" /></FormRow>
        <FormRow>
          <FormLabel htmlFor="dat">Datumsbereich</FormLabel>
          <TextField id="dat" $w={148} />
          <FormGapInline />
          <FormLabel htmlFor="woche" $w={64}>Woche</FormLabel>
          <Spin>
            <BareInput id="woche" />
            <Arrows><SpinCaret up /><SpinCaret /></Arrows>
          </Spin>
        </FormRow>
        <FormRow><FormLabel htmlFor="verb">verbucht</FormLabel><Tick id="verb" /></FormRow>
        <FormGap />
        <Legend>Bauherrenadresse</Legend>
        <AddressBox aria-label="Bauherrenadresse">
          <FormRow><FormLabel htmlFor="anr">Anrede</FormLabel><TextField id="anr" /></FormRow>
          <FormRow><FormLabel htmlFor="vor">Vorname</FormLabel><Combo id="vor" /></FormRow>
          <FormRow><FormLabel htmlFor="nam">Name</FormLabel><Combo id="nam" /></FormRow>
          <FormRow><FormLabel htmlFor="nam2">Name 2</FormLabel><TextField id="nam2" /></FormRow>
          <FormRow><FormLabel htmlFor="str">Strasse</FormLabel><TextField id="str" /></FormRow>
          <FormRow>
            <FormLabel htmlFor="plz">PLZ / Ort</FormLabel>
            <Combo id="plz" w={68} />
            <FormGapInline />
            <Combo />
          </FormRow>
          <FormRow><FormLabel /><TextField aria-label="Zusatz" /></FormRow>
        </AddressBox>
      </FormColumn>
      <NotesBox>
        <Notes aria-label="Beschreibung" />
        <VScroll />
      </NotesBox>
      <VScroll thumb={246} />
    </FormArea>
  </Panel>
);

const PositionGrid = () => (
  <Frame $tone="#b4b4b4">
    <FrameInner>
      <GridArea>
        <GridClip>
          <Table $w={1240}>
            <colgroup>
              {[23, 270, 27, 54, 54, 92].map((w, i) => <col key={i} style={{ width: w }} />)}
              {DAYS.map(d => <col key={d} style={{ width: 72 }} />)}
            </colgroup>
            <thead>
              <tr>
                <HeadCell $mark><Funnel /></HeadCell>
                {['Text', 'ME', 'Pos.Nr', 'Pos.Nr'].map((h, i) => <HeadCell key={i}><HeadText>{h}</HeadText></HeadCell>)}
                <HeadCell $frozen><HeadText $bare>Preis</HeadText></HeadCell>
                {DAYS.map(d => <HeadCell key={d}><HeadText>{d}</HeadText></HeadCell>)}
              </tr>
            </thead>
            <tbody>
              {LINES.map(([text, unit, a, b, tone], i) => (
                <Row key={i} $bg={i === 6 ? '#e5e5e5' : undefined}>
                  <MarkCell>{i === 6 && <RowMark />}</MarkCell>
                  <Cell $tone={tone} $under={i === 1}>{text}</Cell>
                  <Cell>{unit}</Cell>
                  <Cell $tone={tone}>{a}</Cell>
                  <Cell>{b}</Cell>
                  <Cell $frozen />
                  {DAYS.map(d => <Cell key={d} />)}
                </Row>
              ))}
            </tbody>
          </Table>
        </GridClip>
        <GridSide $w={17}>
          <SideHead />
          <SideTrack><VScroll thumb={316} /></SideTrack>
        </GridSide>
      </GridArea>
      <Navigator text="Datensatz 7 von 27" pad={12}>
        <HScroll off />
      </Navigator>
    </FrameInner>
  </Frame>
);

const ImportDialog = () => (
  <Dialog role="dialog" aria-label="Rapporte PQ importieren">
    <Chrome title="Rapporte PQ importieren" />
    <Ribbon>
      <TabRow>
        <Tabs>
          {['Favoriten', 'Datei', 'Bearbeiten', 'Extras', 'Fenster'].map((t, i) => <Tab key={t} $on={i === 0}>{t}</Tab>)}
        </Tabs>
        <Tools><ToolBox $w={36} aria-label="Info"><InfoIcon /></ToolBox></Tools>
      </TabRow>
      <GroupRow>
        <RibbonGroup name="Datei">
          <Buttons items={[{ icon: 'ok', label: 'OK', w: 41 }, { icon: 'cancel', label: 'Abbrechen', w: 61 }]} />
        </RibbonGroup>
        <RibbonGroup name="Bearbeiten">
          <Buttons items={[{ icon: 'find', label: 'Suchen', w: 42 }]} />
          <SearchFinder id="dialogsuche" />
          <Buttons items={[
            { icon: 'findNext', label: 'Suchen\nfortsetzen', w: 57 },
            { icon: 'filter', label: 'Filtern', w: 43 },
            { icon: 'filterOff', label: 'Filter\naufheben', w: 54 },
          ]} />
        </RibbonGroup>
        <RibbonGroup name="Extras">
          <Buttons items={[
            { icon: 'checkAll', label: 'Alle Positionen\nmarkieren', w: 77 },
            { icon: 'checkNone', label: 'Keine Positionen\nmarkieren', w: 86 },
            { icon: 'ok', label: 'Aktuelle Position\nmarkieren', w: 86 },
          ]} />
        </RibbonGroup>
      </GroupRow>
    </Ribbon>
    <DialogBody>
      <Frame $tone="#b4b4b4">
        <FrameInner>
          <GridArea>
            <GridClip>
              <Table>
                <colgroup>
                  {[23, 32, 60, 72, 144, 225, 45, 270].map((w, i) => <col key={i} style={{ width: w }} />)}
                  <col />
                </colgroup>
                <thead>
                  <tr>
                    <HeadCell $mark><Funnel /></HeadCell>
                    <HeadCell $frozen />
                    {['Kategorie', 'Rapport', 'Rapport-Code', 'Datumsbereich', 'Woche', 'Bauherr Anrede'].map(h => (
                      <HeadCell key={h}><HeadText>{h}</HeadText></HeadCell>
                    ))}
                    <HeadCell><HeadText $bare>Bauherr Vorname</HeadText></HeadCell>
                  </tr>
                </thead>
                <tbody>
                  <Row>
                    <MarkCell><Funnel /></MarkCell>
                    <Cell $frozen />
                    <Cell /><Cell /><Cell /><Cell /><Cell /><Cell /><Cell $open />
                  </Row>
                  <Row $bg="#cde4f7">
                    <MarkCell><RowMark /></MarkCell>
                    <Cell $frozen><Tick aria-label="Rapport 1 markieren" /></Cell>
                    <Cell $flush><Combo value="A" focus w={59} /></Cell>
                    <Cell>1</Cell><Cell>Gar</Cell><Cell>22.07.2026</Cell><Cell $end>30</Cell><Cell /><Cell $open />
                  </Row>
                  <Row>
                    <MarkCell />
                    <Cell $frozen><Tick aria-label="Rapport 2 markieren" /></Cell>
                    <Cell>A</Cell><Cell>2</Cell><Cell>Tei</Cell><Cell>22.07.2026</Cell><Cell $end>30</Cell><Cell>Herr</Cell><Cell $open />
                  </Row>
                </tbody>
              </Table>
            </GridClip>
          </GridArea>
          <Navigator text="Datensatz 1 von 2" pad={10} dim>
            <HScroll thumb={313} />
          </Navigator>
        </FrameInner>
      </Frame>
    </DialogBody>
    <KeyStates grip />
  </Dialog>
);

export default function App() {
  return (
    <Shell>
      <GlobalStyle />
      <Chrome dim title={<><Faded>mySORBA Workspace </Faded> - Regiequick/2026003 Regierechnung</>} />
      <MainRibbon />
      <Dock>
        <TariffPane />
        <Workspace>
          <ReportForm />
          <PositionGrid />
          <Panel $h={56}>
            <PanelHead>
              <PanelTitle>Gesamtsumme</PanelTitle>
              <button aria-label="Schliessen"><Cross /></button>
            </PanelHead>
            <SumFields>
              <SumField $lead={110} />
              <SumField $lead={160} />
              <Fill />
              <SumSpin><Thumb $size={5} /><Thumb $size={5} /></SumSpin>
            </SumFields>
          </Panel>
        </Workspace>
      </Dock>
      <TaskStrip>
        <TaskItems items={TASKS} />
        <Fill />
        <TaskItems items={TASKS_END} />
        <TaskMore aria-label="Weitere"><Caret /></TaskMore>
      </TaskStrip>
      <KeyStates />
      <ImportDialog />
      <Pointers width="360" height="710" viewBox="600 150 360 710" fill="#ff9c16">
        <path d="M898 169L922 192 913 196 949 299.500Q950 303 947 304L942 305.500Q939 306 938 303L903 199 893 201z" />
        <path d="M753 798L728 821 725 811 632 841.500Q630 842 629.500 840L627 833Q626.500 831.500 628 831L722 802 720 793z" />
      </Pointers>
      <Watermark>
        <WatermarkHead>Windows aktivieren</WatermarkHead>
        Wechseln Sie zu den Einstellungen, um Windows zu aktivieren.
      </Watermark>
    </Shell>
  );
}

const SumFields = styled.div`
  display: flex;
  flex: 1;
  align-items: flex-end;
  padding: 0 1px 0 0;
`;

const SumField = styled.span<{ $lead: number }>`
  width: 100px;
  height: 1px;
  margin-left: ${p => p.$lead}px;
  background: ${LINE};
`;

const SumSpin = styled.span`
  display: flex;
  flex-direction: column;
  width: 16px;
`;
